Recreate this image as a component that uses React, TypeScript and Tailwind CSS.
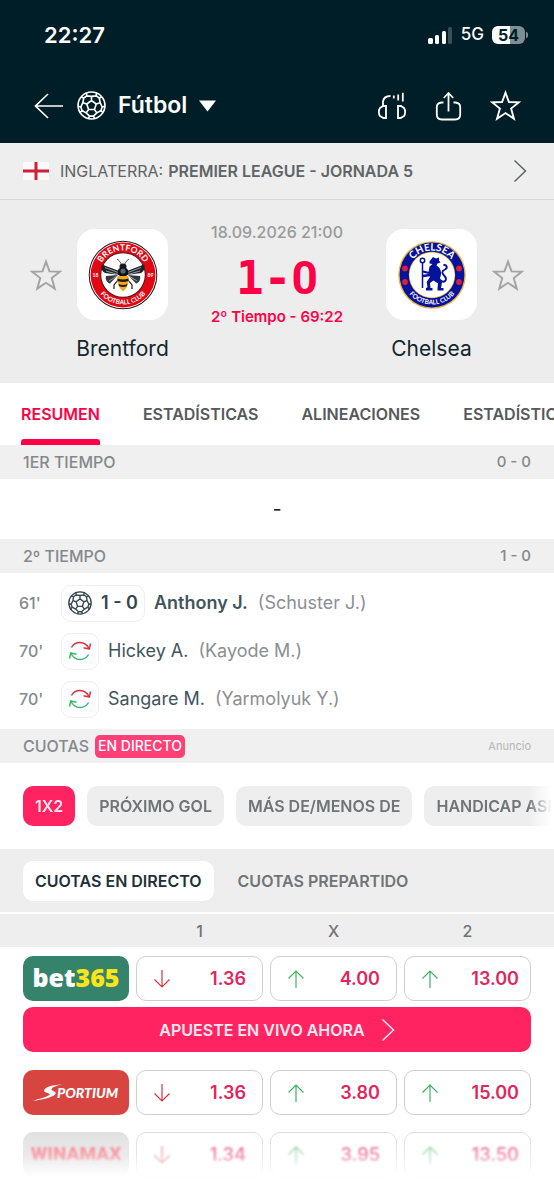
import { clsx } from "clsx";

const polar = (r: number, deg: number): string => {
  const a = (deg * Math.PI) / 180;
  return `${(14 + r * Math.cos(a)).toFixed(2)} ${(14 + r * Math.sin(a)).toFixed(2)}`;
};

const ballPath = [0, 1, 2, 3, 4]
  .map((i) => {
    const a = -90 + i * 72;
    return [
      `M${polar(4.8, a)}L${polar(4.8, a + 72)}`,
      `M${polar(4.8, a)}L${polar(8.8, a)}`,
      `M${polar(12.8, a - 22)}L${polar(10.4, a - 26)}L${polar(8.8, a)}L${polar(10.4, a + 26)}L${polar(12.8, a + 22)}`,
      `M${polar(10.4, a + 26)}L${polar(10.4, a + 46)}`,
    ].join("");
  })
  .join("");

function Ball({ className }: { className: string }) {
  return (
    <svg viewBox="0 0 28 28" className={className} fill="none" stroke="currentColor" strokeWidth="1.6" strokeLinejoin="round" aria-hidden="true">
      <circle cx="14" cy="14" r="13" />
      <path d={ballPath} />
    </svg>
  );
}

function Star({ className }: { className: string }) {
  return (
    <svg viewBox="0 0 30 30" className={className} fill="none" stroke="currentColor" strokeWidth="1.8" aria-hidden="true">
      <path d="M15 2.500 18.300 11.600 28 11.900 20.400 17.900 23.200 27.800 15 22.300 6.800 27.800 9.600 17.900 2 11.900 11.700 11.600Z" />
    </svg>
  );
}

function Chevron({ className }: { className: string }) {
  return (
    <svg viewBox="0 0 14 24" className={className} fill="none" stroke="currentColor" strokeWidth="1.5" aria-hidden="true">
      <path d="M1.5 1.5 12.5 12 1.5 22.5" />
    </svg>
  );
}

function StatusBar() {
  return (
    <div className="flex h-[70px] items-center justify-between pl-[44px] pr-[26px]">
      <span className="text-[22px] font-semibold">22:27</span>
      <div className="flex items-center gap-2">
        <svg viewBox="0 0 25 17" className="h-[17px] w-[25px]" aria-hidden="true">
          <rect x="0" y="11" width="5" height="6" rx="1.5" fill="#fff" />
          <rect x="7" y="8" width="4" height="9" rx="1.5" fill="#fff" />
          <rect x="14" y="4" width="4" height="13" rx="1.5" fill="#fff" />
          <rect x="20" y="0" width="4" height="17" rx="1.5" fill="#3a4f58" />
        </svg>
        <span className="text-[17px] font-medium">5G</span>
        <div className="flex items-center gap-px">
          <span className="flex h-[18px] w-[33px] items-center justify-center rounded-[6px] bg-linear-to-r from-white from-55% to-[#7f8e94] to-55% text-base font-bold text-[#001e28]">
            54
          </span>
          <span className="h-[6px] w-[2px] rounded-r-full bg-[#7f8e94]" />
        </div>
      </div>
    </div>
  );
}

function TopBar() {
  return (
    <div className="flex h-[73px] items-center justify-between pb-[2px] pl-[34px] pr-[33px]">
      <div className="flex items-center gap-[13px]">
        <button type="button" aria-label="Volver">
          <svg viewBox="0 0 30 26" className="h-[26px] w-[30px]" fill="none" stroke="currentColor" strokeWidth="1.7" aria-hidden="true">
            <path d="M14 1 1.5 13 14 25M1.5 13H29" />
          </svg>
        </button>
        <button type="button" className="flex items-center gap-[12px]">
          <Ball className="size-[29px]" />
          <span className="text-[23px] font-semibold">Fútbol</span>
          <svg viewBox="0 0 17 12" className="h-[12px] w-[17px]" fill="currentColor" aria-hidden="true">
            <path d="M0 .5h17L8.500 11.500z" />
          </svg>
        </button>
      </div>
      <div className="flex items-center gap-[28px]">
        <button type="button" aria-label="Audio">
          <svg viewBox="0 0 30 28" className="h-[28px] w-[30px]" fill="none" stroke="currentColor" strokeWidth="1.800" aria-hidden="true">
            <path d="M9 14v12H6.500L3 24c-1.500-2-1.500-6 0-8l3-2zM21 14v12h2.500L27 24c1.500-2 1.500-6 0-8l-3-2z" />
            <path d="M6 14V9.500C6.500 6 9 4 13.500 4M16.800 3.500v3M21.200 2.500v6M25.800.8v8.700" />
          </svg>
        </button>
        <button type="button" aria-label="Compartir">
          <svg viewBox="0 0 27 30" className="h-[30px] w-[27px]" fill="none" stroke="currentColor" strokeWidth="1.800" aria-hidden="true">
            <path d="M8.500 11.500H6.500Q1.800 12 1.800 16v7.500q0 5 5 5h13.400q5 0 5-5V16q0-4-4.700-4.500h-2M13.500 20.500V2M8.800 7l4.700-5 4.700 5" strokeLinejoin="round" />
          </svg>
        </button>
        <button type="button" aria-label="Favorito">
          <Star className="size-[31px]" />
        </button>
      </div>
    </div>
  );
}

function BrentfordCrest() {
  return (
    <svg viewBox="0 0 70 70" className="size-[70px]" role="img" aria-label="Brentford">
      <defs>
        <path id="b-top" d="M10.500 35a24.500 24.500 0 0 1 49 0" />
        <path id="b-bottom" d="M5.500 35a29.500 29.500 0 0 0 59 0" />
      </defs>
      <circle cx="35" cy="35" r="34.300" fill="#2c1517" />
      <circle cx="35" cy="35" r="33.300" fill="#fff" />
      <circle cx="35" cy="35" r="32.400" fill="#e30613" />
      <circle cx="35" cy="35" r="22.600" fill="#2c1517" />
      <circle cx="35" cy="35" r="21.800" fill="#fff" />
      <g fill="#fff" fontFamily="Lato, sans-serif" fontWeight="700">
        <text fontSize="8.500" textAnchor="middle"><textPath href="#b-top" startOffset="50%">BRENTFORD</textPath></text>
        <text fontSize="6.500" textAnchor="middle"><textPath href="#b-bottom" startOffset="50%">FOOTBALL CLUB</textPath></text>
        <text x="7.500" y="37" fontSize="5" textAnchor="middle">18</text>
        <text x="62.500" y="37" fontSize="5" textAnchor="middle">89</text>
      </g>
      <path d="M34 25 31 20.500 29 19M36 25l3-4.500 2-1.500" fill="none" stroke="#1a1a1a" strokeWidth=".7" />
      <path d="M31 31 14 24.500c-1.500 3 0 7 3 8.500l14 2zM39 31l17-6.500c1.500 3 0 7-3 8.500l-14 2z" fill="#20242a" />
      <path d="M30 35 18 36c-1 3 1 7 4 7.500zM40 35l12 1c1 3-1 7-4 7.500z" fill="#343941" />
      <path d="m17 27.500 13 5M18 31l12 3.500M53 27.500l-13 5M52 31l-12 3.500M21 41l8-5M49 41l-8-5" stroke="#b8bcc0" strokeWidth=".8" />
      <path d="m30 40-4 5v4M40 40l4 5v4" fill="none" stroke="#1a1a1a" strokeWidth="1.200" />
      <ellipse cx="35" cy="26.500" rx="3.500" ry="3" fill="#1a1a1a" />
      <ellipse cx="35" cy="32" rx="5.300" ry="4.800" fill="#111" />
      <circle cx="35" cy="31" r="2.600" fill="#526778" />
      <path d="M29.800 36h10.400c1.500 6-1 12-5.200 15.500C30.800 48 28.300 42 29.800 36z" fill="#f7a81b" />
      <path d="M29.500 38.500q5.500 2 11 0v2.500q-5.500 2-11 0zM30.500 44q4.500 1.800 9 0l-.8 2.300q-3.700 1.400-7.400 0z" fill="#1a1a1a" />
    </svg>
  );
}

function ChelseaCrest() {
  return (
    <svg viewBox="0 0 70 70" className="size-[70px]" role="img" aria-label="Chelsea">
      <defs>
        <path id="c-top" d="M10.500 35a24.500 24.500 0 0 1 49 0" />
        <path id="c-bottom" d="M5.500 35a29.500 29.500 0 0 0 59 0" />
      </defs>
      <circle cx="35" cy="35" r="33.800" fill="#e8b93e" />
      <circle cx="35" cy="35" r="32.400" fill="#06119c" />
      <circle cx="35" cy="35" r="23.200" fill="#e8b93e" />
      <circle cx="35" cy="35" r="22.500" fill="#fff" />
      <g fill="#fff" fontFamily="Lato, sans-serif" fontWeight="700" textAnchor="middle">
        <text fontSize="10"><textPath href="#c-top" startOffset="50%">CHELSEA</textPath></text>
        <text fontSize="6.500"><textPath href="#c-bottom" startOffset="50%">FOOTBALL CLUB</textPath></text>
      </g>
      <g fill="#d9203c">
        <circle cx="8" cy="28.500" r="2.900" />
        <circle cx="8" cy="42" r="2.900" />
        <circle cx="62" cy="28.500" r="2.900" />
        <circle cx="62" cy="42" r="2.900" />
      </g>
      <g fill="none" stroke="#06119c">
        <circle cx="25.500" cy="20.500" r="2.200" strokeWidth="1.500" />
        <path d="M25.500 23v25" strokeWidth="1.500" />
        <path d="M43 40c4 4 8 0 4.500-4-3-3-3-5 .5-6.500 3-1.500 2-5-1.500-4.500" strokeWidth="1.900" />
        <path d="M26 31.500l6 1.500M26 36l7-1" strokeWidth="2.300" />
      </g>
      <path d="M34 19.500l2-2.500 3 1.500 3-1v3l1.500 2-3 1-1 2 3 2.500c2 3 2 7 .5 10l2 4.500-1 5.500h2.500v2.500h-6v-2l.5-5-4.500-3-3.500 2.500.5 5h2v2.500h-6.500V48l1.500-.8-.8-5.200 3.300-5-1.500-5 1-5.500 3-2.500-3-.5v-2z" fill="#06119c" />
    </svg>
  );
}

function Team({ name, crest, starFirst }: { name: string; crest: React.ReactNode; starFirst?: boolean }) {
  return (
    <div className={clsx("flex gap-[15px]", starFirst ? "flex-row" : "flex-row-reverse")}>
      <button type="button" aria-label={`Seguir a ${name}`} className="flex h-[91px] items-center text-[#a3a3a3]">
        <Star className="size-[32px]" />
      </button>
      <div className="flex w-[91px] flex-col items-center">
        <div className="flex size-[91px] items-center justify-center rounded-[18px] bg-white">{crest}</div>
        <span className="mt-[15px] text-[21px] leading-7 text-[#14262e]">{name}</span>
      </div>
    </div>
  );
}

function SectionBar({ title, score }: { title: string; score: string }) {
  return (
    <div className="flex h-[34px] items-center justify-between bg-[#f0f0f0] px-[23px] font-medium text-[#84898b]">
      <h2 className="text-base">{title}</h2>
      <span className="text-[15px]">{score}</span>
    </div>
  );
}

function Swap() {
  return (
    <svg viewBox="0 0 24 22" className="h-[22px] w-[24px]" fill="none" strokeWidth="1.500" aria-hidden="true">
      <path d="M3.500 7.500C7 1 17 .5 21 8.500M22.500 3.500 21.300 9l-5.800-1.300" stroke="#dc3545" />
      <path d="M20.500 14.500C17 21 7 21.500 3 13.500M1.500 18.500 2.700 13l5.800 1.300" stroke="#3dbb6b" />
    </svg>
  );
}

type GameEvent = { minute: string; name: string; detail: string; goal?: string };

const events: GameEvent[] = [
  { minute: "61'", name: "Anthony J.", detail: "(Schuster J.)", goal: "1 - 0" },
  { minute: "70'", name: "Hickey A.", detail: "(Kayode M.)" },
  { minute: "70'", name: "Sangare M.", detail: "(Yarmolyuk Y.)" },
];

function EventRow({ minute, name, detail, goal }: GameEvent) {
  return (
    <li className="flex h-[48px] items-center pl-[19px]">
      <span className="w-[42px] text-base font-medium text-[#84898b]">{minute}</span>
      <span className="flex h-[37px] min-w-[37px] items-center justify-center gap-[9px] rounded-[10px] border border-[#f1ecef] px-[6px] text-lg font-semibold text-[#33474f]">
        {goal ? (
          <>
            <Ball className="size-[24px]" />
            {goal}
          </>
        ) : (
          <Swap />
        )}
      </span>
      <span className={clsx("ml-[9px] text-lg text-[#42545b]", goal && "font-semibold")}>{name}</span>
      <span className="ml-[10px] text-lg text-[#8b8f91]">{detail}</span>
    </li>
  );
}

function Bet365() {
  return (
    <span className="flex h-[45px] items-center justify-center rounded-[10px] bg-[#35836a] pb-[2px] font-['Open_Sans',sans-serif] text-[25px] leading-none font-extrabold text-white">
      bet<span className="text-[#ffe418]">365</span>
    </span>
  );
}

function Sportium() {
  return (
    <span className="flex h-[45px] items-center justify-center rounded-[10px] bg-[#d8443f]">
      <svg viewBox="0 0 106 45" className="h-[45px] w-[106px]" role="img" aria-label="Sportium">
        <path d="M39 14.500C28 15 22 17 21 20.500c0 2 5 2.500 6 4-4 3-11 4-17.500 6.500C19 29.500 29 28 32.500 24c1.500-3-4.500-3-4-4.500 1-2.500 5-4 10.500-5z" fill="#fff" />
        <text x="34" y="28" fill="#fff" fontFamily="Lato, sans-serif" fontWeight="900" fontStyle="italic" fontSize="14">PORTIUM</text>
      </svg>
    </span>
  );
}

function Winamax() {
  return (
    <span className="flex h-[45px] items-center justify-center rounded-[10px] bg-[#d4d4d4]">
      <span className="font-[Roboto,sans-serif] text-[19px] font-black text-[#f0475a] blur-[1px]">WINAMAX</span>
    </span>
  );
}

type Odd = { dir: "up" | "down"; value: string };

function OddButton({ dir, value, faded }: Odd & { faded?: boolean }) {
  return (
    <button type="button" className="flex h-[45px] w-full items-center justify-between rounded-[10px] border border-[#cfcfcf] bg-white pl-4 pr-[16px] in-[.last-col]:pr-[11px]">
      <svg
        viewBox="0 0 18 18"
        className={clsx("size-[18px]", dir === "up" ? "text-[#41b068]" : "rotate-180 text-[#cf3742]", faded && "blur-[1px]")}
        fill="none"
        stroke="currentColor"
        strokeWidth="1.200"
        aria-hidden="true"
      >
        <path d="M9 18V1M1.500 8.500 9 1l7.500 7.500" />
      </svg>
      <span className={clsx("text-lg font-semibold text-[#e0265c]", faded && "blur-[1px]")}>{value}</span>
    </button>
  );
}

const rowGrid = "grid grid-cols-[106px_1fr_1fr_1fr] gap-x-[7px] px-[23px]";

function OddsRow({ logo, odds, faded }: { logo: React.ReactNode; odds: Odd[]; faded?: boolean }) {
  return (
    <tr className={clsx(rowGrid, faded && "[mask-image:linear-gradient(to_bottom,rgba(0,0,0,0.7),rgba(0,0,0,0.5)_50%,rgba(0,0,0,0.03)_95%)]")}>
      <th scope="row" className="block">{logo}</th>
      {odds.map((odd, i) => (
        <td key={i} className={clsx("block", i === 2 && "last-col")}>
          <OddButton {...odd} faded={faded} />
        </td>
      ))}
    </tr>
  );
}

function OddsTable() {
  return (
    <table className="block">
      <thead className="block border-t-2 border-white bg-[#eeeeee]">
        <tr className={clsx(rowGrid, "h-[33px] items-center text-base text-[#6f7476]")}>
          <td />
          <th scope="col" className="font-medium">1</th>
          <th scope="col" className="font-medium">X</th>
          <th scope="col" className="font-medium">2</th>
        </tr>
      </thead>
      <tbody className="flex flex-col pt-[9px]">
        <OddsRow logo={<Bet365 />} odds={[{ dir: "down", value: "1.36" }, { dir: "up", value: "4.00" }, { dir: "up", value: "13.00" }]} />
        <tr className="flex px-[23px] pt-[6px] pb-[18px]">
          <td className="flex-1">
            <a href="#apostar" className="flex h-[45px] items-center justify-center gap-4 rounded-[10px] bg-[#ff2461] text-base font-semibold text-[#ffe9f0]">
              APUESTE EN VIVO AHORA
              <Chevron className="h-[24px] w-[14px]" />
            </a>
          </td>
        </tr>
        <OddsRow logo={<Sportium />} odds={[{ dir: "down", value: "1.36" }, { dir: "up", value: "3.80" }, { dir: "up", value: "15.00" }]} />
        <tr className="block h-[17px]" />
        <OddsRow faded logo={<Winamax />} odds={[{ dir: "down", value: "1.34" }, { dir: "up", value: "3.95" }, { dir: "up", value: "13.50" }]} />
      </tbody>
    </table>
  );
}

const tabs = ["RESUMEN", "ESTADÍSTICAS", "ALINEACIONES", "ESTADÍSTICAS"];
const markets = ["1X2", "PRÓXIMO GOL", "MÁS DE/MENOS DE", "HANDICAP ASIÁTICO"];

export default function App() {
  return (
    <div className="min-h-screen overflow-hidden bg-white font-[Inter,sans-serif] text-[#14262e]">
      <header className="bg-[#001e28] text-white">
        <StatusBar />
        <TopBar />
      </header>

      <a href="#liga" className="flex h-[57px] items-center border-b border-[#d3d7d8] bg-[#eeeeee] pl-[23px] pr-[27px] text-base text-[#5f6466]">
        <svg viewBox="0 0 26 18" className="h-[18px] w-[26px]" aria-hidden="true">
          <path d="M0 0h26v18H0z" fill="#fafafa" />
          <path d="M11.500 0h3v18h-3zM0 7.500h26v3H0z" fill="#ce2138" />
        </svg>
        <span className="ml-[11px]">INGLATERRA:</span>
        <span className="ml-[5px] flex-1 font-semibold">PREMIER LEAGUE - JORNADA 5</span>
        <Chevron className="h-[24px] w-[14px]" />
      </a>

      <section className="flex justify-between bg-[#ededed] px-[30px] pt-[29px] pb-[20px]">
        <Team name="Brentford" crest={<BrentfordCrest />} starFirst />
        <div className="flex flex-col items-center whitespace-nowrap">
          <time className="-mt-[9px] text-base leading-6 font-medium text-[#9a9a9a]">18.09.2026 21:00</time>
          <strong className="flex h-[63px] items-center pt-[4px] text-[46px] leading-none font-bold text-[#ff0046]">
            <span className="font-['DejaVu_Sans_Mono',monospace]">1-</span>
            <span className="font-[Roboto,sans-serif]">0</span>
          </strong>
          <span className="text-[15px] leading-5 font-semibold text-[#ff0046]">2º Tiempo - 69:22</span>
        </div>
        <Team name="Chelsea" crest={<ChelseaCrest />} />
      </section>

      <nav className="flex h-[62px] gap-[41px] overflow-hidden pl-[20px] text-base font-semibold whitespace-nowrap text-[#54595b]">
        {tabs.map((tab, i) => (
          <button key={tab + i} type="button" className={clsx("flex shrink-0 flex-col items-center justify-end px-px", i === 0 && "text-[#ff0046]")}>
            <span className="flex flex-1 items-center pt-[6px]">{tab}</span>
            <span className={clsx("h-[6px] w-full rounded-t-[3px]", i === 0 && "bg-[#ff0046]")} />
          </button>
        ))}
      </nav>

      <SectionBar title="1ER TIEMPO" score="0 - 0" />
      <p className="flex h-[60px] items-center justify-center text-xl">-</p>
      <SectionBar title="2º TIEMPO" score="1 - 0" />
      <ul className="pt-[6px] pb-[6px]">
        {events.map((event) => (
          <EventRow key={event.name} {...event} />
        ))}
      </ul>

      <div className="flex h-[34px] items-center bg-[#f0f0f0] px-[23px] text-base font-medium text-[#84898b]">
        <h2>CUOTAS</h2>
        <span className="ml-[6px] flex h-[23px] items-center rounded-[5px] bg-[#ff4077] px-[3px] text-sm font-medium text-white">EN DIRECTO</span>
        <span className="ml-auto text-[11px] font-normal text-[#b5b5b5]">Anuncio</span>
      </div>

      <div className="flex h-[86px] items-center gap-[12px] overflow-hidden pl-[23px] [mask-image:linear-gradient(to_right,black_calc(100%-26px),transparent_calc(100%-2px))]">
        {markets.map((market, i) => (
          <button
            key={market}
            type="button"
            className={clsx(
              "h-[40px] shrink-0 rounded-[10px] px-[12px] text-base font-semibold whitespace-nowrap",
              i === 0 ? "bg-[#ff2461] text-[#ffe9f0]" : "bg-[#eeeeee] text-[#6f7476]",
            )}
          >
            {market}
          </button>
        ))}
      </div>

      <div className="flex h-[63px] items-center gap-[12px] bg-[#eeeeee] pl-[23px] text-base font-semibold">
        <button type="button" className="h-[40px] rounded-[10px] bg-white px-[12px] text-[#1d3139]">CUOTAS EN DIRECTO</button>
        <button type="button" className="h-[40px] px-[12px] text-[#6f7476]">CUOTAS PREPARTIDO</button>
      </div>

      <OddsTable />
    </div>
  );
}
